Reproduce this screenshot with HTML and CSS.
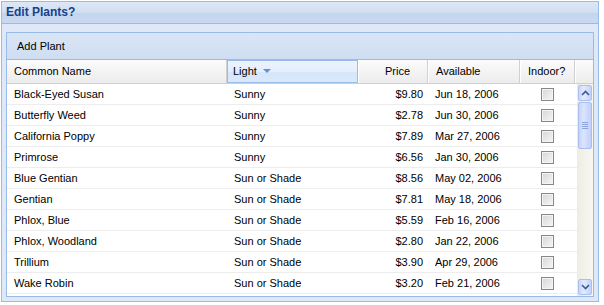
FILE: index.html
```html
<!DOCTYPE html>
<html lang="en">
<head>
    <meta charset="UTF-8">
    <title>Edit Plants?</title>
    <link rel="stylesheet" href="styles.css">
</head>
<body>
    <div class="panel">
        <div class="panel-header">Edit Plants?</div>
        <div class="panel-body">
            <div class="grid">
                <div class="toolbar"><span class="tb-btn">Add Plant</span></div>
                <div class="grid-head">
                    <div class="hd c-name">Common Name</div>
                    <div class="hd c-light sorted">Light <span class="sort-arrow"></span></div>
                    <div class="hd c-price">Price</div>
                    <div class="hd c-avail">Available</div>
                    <div class="hd c-indoor">Indoor?</div>
                    <div class="hd c-fill"></div>
                </div>
                <div class="grid-body">
                    <div class="rows" id="rows"></div>
                    <div class="scrollbar">
                        <div class="sb-btn sb-up"><svg width="9" height="6" viewBox="0 0 9 6"><path d="M1 5 L4.5 1.5 L8 5" fill="none" stroke="#3a5a96" stroke-width="1.6"/></svg></div>
                        <div class="sb-thumb"><span></span><span></span><span></span><span></span></div>
                        <div class="sb-track"></div>
                        <div class="sb-btn sb-down"><svg width="9" height="6" viewBox="0 0 9 6"><path d="M1 1 L4.5 4.5 L8 1" fill="none" stroke="#3a5a96" stroke-width="1.6"/></svg></div>
                    </div>
                </div>
            </div>
        </div>
    </div>

    <script>
        // plant data
        var plants = [
            ["Black-Eyed Susan", "Sunny", "$9.80", "Jun 18, 2006"],
            ["Butterfly Weed", "Sunny", "$2.78", "Jun 30, 2006"],
            ["California Poppy", "Sunny", "$7.89", "Mar 27, 2006"],
            ["Primrose", "Sunny", "$6.56", "Jan 30, 2006"],
            ["Blue Gentian", "Sun or Shade", "$8.56", "May 02, 2006"],
            ["Gentian", "Sun or Shade", "$7.81", "May 18, 2006"],
            ["Phlox, Blue", "Sun or Shade", "$5.59", "Feb 16, 2006"],
            ["Phlox, Woodland", "Sun or Shade", "$2.80", "Jan 22, 2006"],
            ["Trillium", "Sun or Shade", "$3.90", "Apr 29, 2006"],
            ["Wake Robin", "Sun or Shade", "$3.20", "Feb 21, 2006"]
        ];

        var html = "";
        for (var i = 0; i < plants.length; i++) {
            var p = plants[i];
            html += '<div class="row">' +
                '<div class="cell c-name">' + p[0] + '</div>' +
                '<div class="cell c-light">' + p[1] + '</div>' +
                '<div class="cell c-price">' + p[2] + '</div>' +
                '<div class="cell c-avail">' + p[3] + '</div>' +
                '<div class="cell c-indoor"><span class="check"></span></div>' +
                '</div>';
        }
        document.getElementById("rows").innerHTML = html;
    </script>
</body>
</html>
```

FILE: styles.css
```css
body {
    margin: 0;
    background-color: #fff;
    font-family: "Liberation Sans", Arial, sans-serif;
    font-size: 11px;
    color: #000;
}

.panel {
    margin: 1px;
    width: 596px;
    height: 299px;
    border: 1px solid #99bbe8;
    display: flex;
    flex-direction: column;
}

.panel-header {
    height: 21px;
    line-height: 21px;
    padding-left: 4px;
    border-bottom: 1px solid #99bbe8;
    background: linear-gradient(#dde8f6, #d0def2 50%, #c3d5ee 51%, #c9d9f0);
    color: #15428b;
    font-weight: bold;
    font-size: 12px;
}

.panel-body {
    flex: 1;
    background-color: #dfe8f6;
    padding: 8px 4px 4px 4px;
    display: flex;
}

.grid {
    flex: 1;
    border: 1px solid #99bbe8;
    background-color: #fff;
    display: flex;
    flex-direction: column;
}

.toolbar {
    height: 26px;
    border-bottom: 1px solid #99bbe8;
    background: linear-gradient(#dae6f5, #cfddf1);
    display: flex;
    align-items: center;
}

.tb-btn {
    padding-left: 10px;
    font-size: 11px;
}

.grid-head {
    display: flex;
    height: 23px;
    background: linear-gradient(#fbfbfb, #ececec);
    border-bottom: 1px solid #d0d0d0;
}

.hd {
    box-sizing: border-box;
    line-height: 22px;
    padding-left: 7px;
    border-right: 1px solid #d0d0d0;
    border-left: 1px solid #fff;
}

.hd.sorted {
    background: linear-gradient(#ebf3fd, #e4eefc 50%, #d6e6fa 51%, #d9e8fb);
    border: 1px solid #99bbe8;
    line-height: 20px;
    padding-left: 5px;
}

.sort-arrow {
    display: inline-block;
    width: 0;
    height: 0;
    margin-left: 3px;
    vertical-align: 2px;
    border-left: 4px solid transparent;
    border-right: 4px solid transparent;
    border-top: 4px solid #6b8fcb;
}

.c-name { width: 220px; }
.c-light { width: 131px; }
.c-price { width: 70px; text-align: right; }
.c-avail { width: 92px; }
.c-indoor { width: 55px; }
.c-fill { flex: 1; border-right: none; }

.hd.c-price { padding-right: 17px; }
.hd.c-name { border-left: none; }

.grid-body {
    flex: 1;
    display: flex;
}

.rows {
    width: 570px;
}

.row {
    display: flex;
    height: 20px;
    border-bottom: 1px solid #ededed;
}

.cell {
    box-sizing: border-box;
    line-height: 20px;
    padding-left: 7px;
    white-space: nowrap;
}

.cell.c-price {
    padding-right: 5px;
}

.cell.c-indoor {
    display: flex;
    align-items: center;
    justify-content: center;
    padding-left: 0;
    padding-right: 1px;
}

.check {
    box-sizing: border-box;
    width: 13px;
    height: 13px;
    border: 1px solid #878787;
    background: linear-gradient(135deg, #d6d6d6, #f6f6f6);
    box-shadow: inset 0 0 0 1px #f4f4f4;
}

.scrollbar {
    width: 16px;
    display: flex;
    flex-direction: column;
    background: linear-gradient(90deg, #eeede5, #f7f6f1);
    padding-top: 1px;
}

.sb-btn {
    box-sizing: border-box;
    height: 16px;
    margin: 0 1px;
    border: 1px solid #a8bff0;
    border-radius: 2px;
    background: linear-gradient(90deg, #c9d6fb, #e3eafd 40%, #c3d1fa);
    display: flex;
    align-items: center;
    justify-content: center;
}

.sb-thumb {
    box-sizing: border-box;
    height: 47px;
    margin: 1px 1px 0 1px;
    border: 1px solid #a8bff0;
    border-radius: 2px;
    background: linear-gradient(90deg, #c6d4fb, #dce5fd 40%, #c0cefa);
    display: flex;
    flex-direction: column;
    align-items: center;
    justify-content: center;
    gap: 1px;
}

.sb-thumb span {
    width: 6px;
    height: 1px;
    background-color: #8aa3dc;
}

.sb-track {
    flex: 1;
}

.sb-down {
    margin-bottom: 1px;
}
```
